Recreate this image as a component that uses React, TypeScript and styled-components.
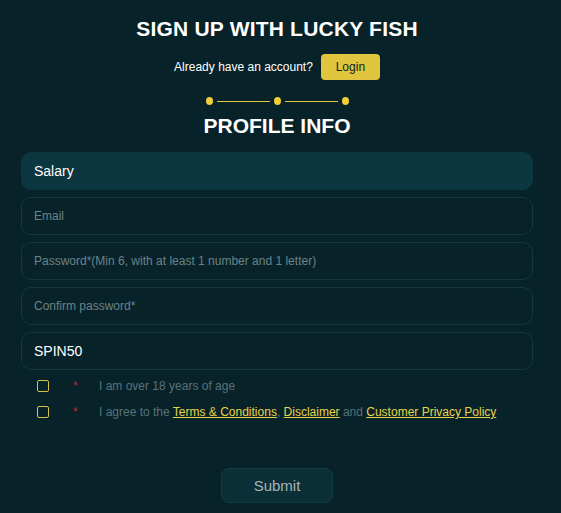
import React from 'react';
import styled, { createGlobalStyle } from 'styled-components';

const GlobalStyle = createGlobalStyle`
  html, body {
    margin: 0;
    padding: 0;
    background: #072229;
    font-family: "Liberation Sans", Arial, sans-serif;
  }
`;

function App() {
  return (
    <>
      <GlobalStyle />
      <Page>
        <Title>SIGN UP WITH LUCKY FISH</Title>
        <LoginRow>
          <span>Already have an account?</span>
          <LoginButton type="button">Login</LoginButton>
        </LoginRow>
        <Steps>
          <Dot />
          <Line />
          <Dot />
          <Line />
          <Dot />
        </Steps>
        <SubTitle>PROFILE INFO</SubTitle>
        <Form>
          <Field $filled>Salary</Field>
          <Field $placeholder>Email</Field>
          <Field $placeholder>Password*(Min 6, with at least 1 number and 1 letter)</Field>
          <Field $placeholder>Confirm password*</Field>
          <Field>SPIN50</Field>
          <Checks>
            <CheckRow>
              <Box />
              <Star>*</Star>
              <CheckText>I am over 18 years of age</CheckText>
            </CheckRow>
            <CheckRow>
              <Box />
              <Star>*</Star>
              <CheckText>
                I agree to the <Link>Terms &amp; Conditions</Link>, <Link>Disclaimer</Link> and{' '}
                <Link>Customer Privacy Policy</Link>
              </CheckText>
            </CheckRow>
          </Checks>
          <SubmitButton type="button">Submit</SubmitButton>
        </Form>
      </Page>
    </>
  );
}

export default App;

const Page = styled.div`
  width: 561px;
  height: 513px;
  box-sizing: border-box;
  padding: 17px 28px 0 21px;
  display: flex;
  flex-direction: column;
  align-items: center;
  color: #fff;
  overflow: hidden;
`;

const Title = styled.h1`
  margin: 0;
  font-size: 21px;
  line-height: 24px;
  font-weight: 700;
  letter-spacing: 0.2px;
  color: #fff;
`;

const LoginRow = styled.div`
  margin-top: 13px;
  display: flex;
  align-items: center;
  gap: 8px;
  font-size: 12px;
  color: #fff;
`;

const LoginButton = styled.button`
  width: 59px;
  height: 26px;
  border: none;
  border-radius: 4px;
  background: #e2c53f;
  color: #0b1f22;
  font-family: inherit;
  font-size: 12px;
  padding: 0;
`;

const Steps = styled.div`
  margin-top: 17px;
  display: flex;
  align-items: center;
  gap: 1px;
`;

const Dot = styled.span`
  width: 7px;
  height: 8px;
  border-radius: 50%;
  background: #f0cf3a;
`;

const Line = styled.span`
  width: 53px;
  height: 1px;
  margin: 0 3px;
  background: #e6c63c;
`;

const SubTitle = styled.h2`
  margin: 9px 0 0;
  font-size: 21px;
  line-height: 24px;
  font-weight: 700;
  color: #fff;
`;

const Form = styled.div`
  margin-top: 14px;
  width: 512px;
  display: flex;
  flex-direction: column;
  gap: 7px;
`;

const Field = styled.div<{ $filled?: boolean; $placeholder?: boolean }>`
  height: 38px;
  box-sizing: border-box;
  padding: 0 12px;
  display: flex;
  align-items: center;
  border-radius: 10px;
  border: 1px solid ${(p) => (p.$filled ? '#0c3640' : '#133840')};
  background: ${(p) => (p.$filled ? '#0c3640' : '#072229')};
  color: ${(p) => (p.$placeholder ? '#6c8388' : '#fff')};
  font-size: ${(p) => (p.$placeholder ? '12px' : '14px')};
`;

const Checks = styled.div`
  margin-top: 3px;
  display: flex;
  flex-direction: column;
  gap: 14px;
`;

const CheckRow = styled.div`
  display: flex;
  align-items: center;
  height: 12px;
  padding-left: 16px;
`;

const Box = styled.span`
  width: 10px;
  height: 10px;
  border: 1px solid #d6c24a;
  border-radius: 2px;
  flex-shrink: 0;
`;

const Star = styled.span`
  margin-left: 24px;
  width: 26px;
  color: #c0283a;
  font-size: 12px;
  line-height: 12px;
`;

const CheckText = styled.span`
  font-size: 12px;
  color: #58737a;
  white-space: nowrap;
`;

const Link = styled.a`
  color: #e8d24a;
  text-decoration: underline;
`;

const SubmitButton = styled.button`
  margin: 43px auto 0;
  width: 112px;
  height: 35px;
  border-radius: 8px;
  border: 1px solid #123d45;
  background: #0b2f37;
  color: #a6b5b7;
  font-family: inherit;
  font-size: 15px;
  padding: 0;
`;
